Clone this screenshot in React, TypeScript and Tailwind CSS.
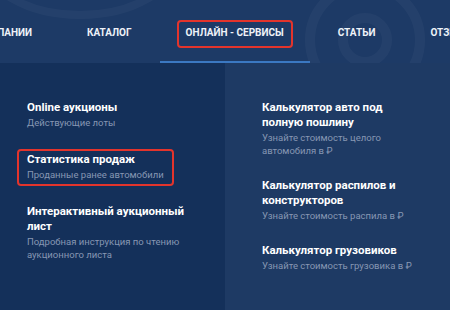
import type { ReactNode } from 'react';

interface MenuItem {
  title: string;
  subtitle: string;
  marked?: boolean;
}

const leftItems: MenuItem[] = [
  { title: 'Online аукционы', subtitle: 'Действующие лоты' },
  { title: 'Статистика продаж', subtitle: 'Проданные ранее автомобили', marked: true },
  { title: 'Интерактивный аукционный лист', subtitle: 'Подробная инструкция по чтению аукционного листа' },
];

const rightItems: MenuItem[] = [
  { title: 'Калькулятор авто под полную пошлину', subtitle: 'Узнайте стоимость целого автомобиля в ₽' },
  { title: 'Калькулятор распилов и конструкторов', subtitle: 'Узнайте стоимость распила в ₽' },
  { title: 'Калькулятор грузовиков', subtitle: 'Узнайте стоимость грузовика в ₽' },
];

function MarkBox({ children, className }: { children: ReactNode; className: string }) {
  return (
    <div className="relative">
      {children}
      <span className={`pointer-events-none absolute rounded-[4px] border-2 border-[#e3342c] ${className}`} />
    </div>
  );
}

function Item({ item }: { item: MenuItem }) {
  const body = (
    <div>
      <div className="text-[11.5px] font-bold leading-[15px] text-white">{item.title}</div>
      <div className="mt-[1px] text-[9.5px] leading-[13px] text-[#8797b3]">{item.subtitle}</div>
    </div>
  );
  if (item.marked) {
    return <MarkBox className="-left-[10px] -top-[3px] right-[15px] -bottom-[5px]">{body}</MarkBox>;
  }
  return body;
}

export default function App() {
  return (
    <div className="h-[310px] w-[450px] overflow-hidden bg-[#14305a] font-['Roboto','Liberation_Sans',sans-serif]">
      <header className="relative h-[63px] overflow-hidden bg-[#1d3a66]">
        <svg className="absolute left-[300px] top-[-20px] h-[110px] w-[130px] opacity-[0.03]" viewBox="0 0 130 110" fill="none" stroke="#ffffff" strokeWidth={10}>
          <circle cx="65" cy="60" r="55" />
          <circle cx="65" cy="60" r="22" />
        </svg>
        <svg className="absolute left-[-20px] top-[-60px] h-[80px] w-[200px] opacity-[0.03]" viewBox="0 0 200 80" fill="none" stroke="#ffffff" strokeWidth={8}>
          <ellipse cx="100" cy="20" rx="95" ry="55" />
        </svg>
        <nav className="relative flex h-full items-stretch text-[10px] font-bold uppercase leading-none text-[#eef2f8]">
          <div className="flex w-[59px] shrink-0 justify-end overflow-hidden whitespace-nowrap pr-[27px] pt-[28px]">
            О компании
          </div>
          <div className="shrink-0 whitespace-nowrap px-[28px] pt-[28px]">Каталог</div>
          <div className="shrink-0 border-b-2 border-[#3b78c2] px-[26px] pt-[28px]">
            <MarkBox className="-left-[9px] -right-[9px] -top-[8px] -bottom-[10px]">
              <span className="whitespace-nowrap">Онлайн - сервисы</span>
            </MarkBox>
          </div>
          <div className="shrink-0 whitespace-nowrap px-[28px] pt-[28px]">Статьи</div>
          <div className="shrink-0 whitespace-nowrap px-[27px] pt-[28px]">Отзывы</div>
        </nav>
      </header>
      <div className="flex h-[247px]">
        <div className="w-[225px] bg-[#14305a] pl-[27px] pt-[37px]">
          <div className="flex w-[162px] flex-col gap-[23px]">
            {leftItems.map((it) => (
              <Item key={it.title} item={it} />
            ))}
          </div>
        </div>
        <div className="w-[225px] bg-[#1e3a64] pl-[37px] pt-[37px]">
          <div className="flex w-[152px] flex-col gap-[21px]">
            {rightItems.map((it) => (
              <Item key={it.title} item={it} />
            ))}
          </div>
        </div>
      </div>
    </div>
  );
}
